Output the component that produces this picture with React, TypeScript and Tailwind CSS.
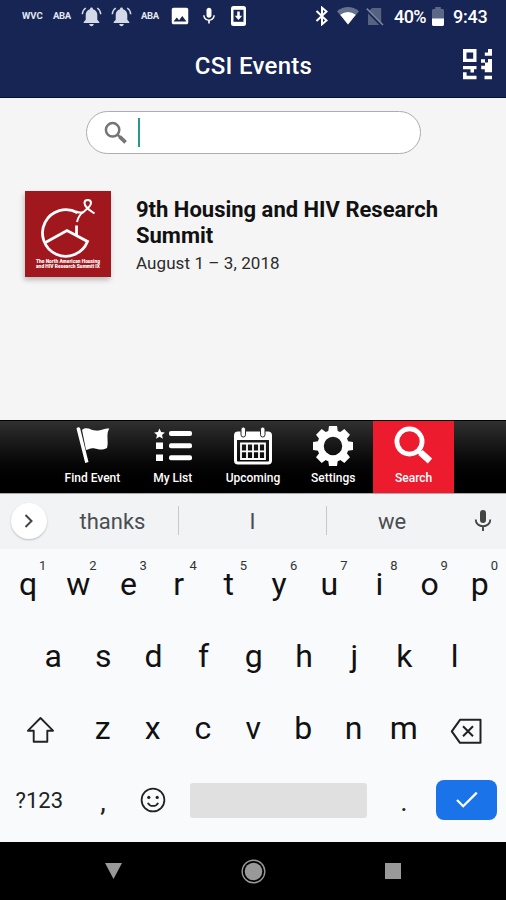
import type { ReactNode } from 'react';
import { MdImage, MdMic } from 'react-icons/md';

const topRow = ['q', 'w', 'e', 'r', 't', 'y', 'u', 'i', 'o', 'p'];
const homeRow = ['a', 's', 'd', 'f', 'g', 'h', 'j', 'k', 'l'];
const bottomRow = ['z', 'x', 'c', 'v', 'b', 'n', 'm'];

function BellIcon() {
  return (
    <svg className="ml-[9px] shrink-0" width="21" height="21" viewBox="0 0 21 21" fill="#d3d9e6">
      <path d="M10.5 1.5c1 0 1.5.7 1.5 1.7 3 .8 4.3 3 4.3 5.8v4.8l2 2.2v1H2.7v-1l2-2.2V9c0-2.8 1.3-5 4.3-5.8 0-1 .5-1.7 1.5-1.7zM8.3 18h4.4c0 1.3-1 2.2-2.2 2.2S8.300 19.300 8.300 18z" />
      <path d="M1.3 8.3C1.4 5.5 2.6 3.5 4.8 2M19.7 8.3c-.1-2.800-1.300-4.800-3.500-6.300" fill="none" stroke="#d3d9e6" strokeWidth="1.5" />
    </svg>
  );
}

function StatusBar() {
  return (
    <div className="flex h-8 items-center text-white">
      <span className="ml-[22px] w-[21px] text-[9.5px] font-bold text-slate-200">WVC</span>
      <span className="ml-[10px] w-[19px] text-[9.5px] font-bold tracking-[-0.4px] text-slate-200">ABA</span>
      <BellIcon />
      <BellIcon />
      <span className="ml-[9px] w-[19px] text-[9.5px] font-bold tracking-[-0.4px] text-slate-200">ABA</span>
      <MdImage className="ml-[9px] size-[22px] shrink-0" />
      <MdMic className="ml-[8px] size-[20px] shrink-0" />
      <svg className="ml-[12px] shrink-0" width="15" height="20" viewBox="0 0 15 20">
        <rect width="15" height="20" rx="2.5" fill="#fff" />
        <rect x="2.5" y="3.8" width="10" height="12" fill="#172554" />
        <path d="M6.2 5.5h2.6v4.2h2.4L7.5 14 3.8 9.7h2.4z" fill="#fff" />
      </svg>
      <svg className="ml-[69px] mr-[5px] shrink-0" width="14" height="20" viewBox="0 0 14 20" fill="none" stroke="#fff" strokeWidth="2">
        <path d="m1.500 5 10 9.500L7 18.300V1.700l4.500 3.800L1.500 15" />
      </svg>
      <svg className="ml-[3px] shrink-0" width="22" height="18" viewBox="0 0 22 18">
        <path d="M0 4.2Q11-4 22 4.2L11 17.5z" fill="#66718f" />
        <path d="M3.2 7.8Q11 2 18.8 7.8L11 17.5z" fill="#fff" />
      </svg>
      <svg className="ml-[7px] shrink-0" width="18" height="19" viewBox="0 0 18 19">
        <path d="M6 1h9.2v17H2V5z" fill="#56627f" />
        <path d="M0 2.2 16 18.6" stroke="#172554" strokeWidth="3" />
        <path d="M.8 1.6 17 18" stroke="#7d87a0" strokeWidth="1.5" />
      </svg>
      <span className="ml-[10px] w-[34px] text-[18px] font-medium tracking-[-0.6px]">40%</span>
      <svg className="ml-[4px] mt-px shrink-0" width="12" height="19" viewBox="0 0 12 19">
        <path d="M3.2 0h5.600v2H11l1 1v9H0V3l1-1h2.200z" fill="#5c6886" />
        <path d="M0 11.5h12V18l-1 1H1l-1-1z" fill="#fff" />
      </svg>
      <span className="ml-[9px] text-[18px] font-medium tracking-[-0.2px]">9:43</span>
    </div>
  );
}

function ScanIcon() {
  return (
    <svg width="30" height="31" viewBox="0 0 30 31" fill="#fff">
      <path fillRule="evenodd" d="M0 0h13.5v13H0zM3.5 3.5v6.2h6.7V3.5z" />
      <path d="M0 17h13.5v3.2H11v3.2H7.5v-3.2H0zM0 23.3h3.6v3.4h9.9v3.6H0z" />
      <path d="M25 0h4v6.8h-7.2V3.6H25zM18 10.3h4v3.2h3V10h4v13.3h-7.2v-3h-3.6v-3.5H22v-3H18zM21.5 26.8H29v3.5h-7.5z" />
    </svg>
  );
}

function Header() {
  return (
    <header className="h-[98px] border-b border-[#080e2b] bg-[#172554]">
      <StatusBar />
      <div className="grid h-[65px] grid-cols-[1fr_auto_1fr] items-center">
        <h1 className="col-start-2 pl-[1px] pt-[2px] text-[24px] font-medium tracking-[0.3px] text-white">CSI Events</h1>
        <div className="mr-[13px] justify-self-end">
          <ScanIcon />
        </div>
      </div>
    </header>
  );
}

function EventLogo() {
  return (
    <svg className="size-[86px] shrink-0 shadow-[-1px_3px_5px_#bbb]" viewBox="0 0 86 86">
      <rect width="86" height="86" fill="#a0181e" />
      <g fill="none" stroke="#fff" strokeWidth="2.8">
        <path d="M52.5 21.8A23.3 23.3 0 1 0 62.5 50.5L42 39.5 19.500 52" />
        <path d="M51.5 45V34.5" />
        <path d="M52 31c1-5 3-8 7-10.5 3-2.5 7-5.5 7-8.5 0-4-6.5-4-6.5 0 0 4 5 7 10 10.5" strokeWidth="2" />
        <path d="M51 20.5c3 1.5 5 1.5 8 .5" strokeWidth="2" />
      </g>
      <text x="43" y="72" textAnchor="middle" textLength="64" lengthAdjust="spacingAndGlyphs" fontSize="5.2" fontWeight="900" fill="#fff">The North American Housing</text>
      <text x="43" y="77" textAnchor="middle" textLength="64" lengthAdjust="spacingAndGlyphs" fontSize="5.2" fontWeight="900" fill="#fff">and HIV Research Summit IX</text>
    </svg>
  );
}

function Events() {
  return (
    <main className="h-[322px] bg-[#f5f5f5] pt-[13px]">
      <div className="mx-auto flex h-[43px] w-[335px] items-center rounded-full border border-[#adadad] bg-white pl-[17px]">
        <svg width="24" height="24" viewBox="0 0 24 24" fill="none" stroke="#757575">
          <circle cx="8.6" cy="8.8" r="6.7" strokeWidth="2.5" />
          <path d="m13.5 13.6 3 3" strokeWidth="2.5" />
          <path d="m15.6 15.7 6 5.6" strokeWidth="3.8" />
        </svg>
        <span className="ml-[10px] h-[29px] w-[2.5px] bg-[#26998a]" />
      </div>
      <article className="mt-[37px] flex pl-[25px]">
        <EventLogo />
        <div className="ml-[25px] pt-[6px]">
          <h2 className="w-[320px] text-[22px] font-bold leading-[25.5px] text-[#111]">
            9th Housing and HIV Research Summit
          </h2>
          <p className="mt-[4px] text-[17px] leading-[22px] tracking-[0.08px] text-[#2b2b2b]">August 1 – 3, 2018</p>
        </div>
      </article>
    </main>
  );
}

function FlagIcon() {
  return (
    <svg width="40" height="40" viewBox="0 0 40 40" fill="#fff">
      <path d="M4.5 2.5a2 2 0 0 1 3.6-.3L16.500 36l-3.300 1z" />
      <path d="M10 3.8c5-4 9 .5 14 .8 5 .3 7-2 13.300-2C33.500 9 37 15 35 22c-6 3-9 1-13 .300-4-.500-5 1-8 1.700z" />
    </svg>
  );
}

function ListIcon() {
  return (
    <svg width="40" height="40" viewBox="0 0 40 40" fill="#fff">
      <path d="m6.5 2.5 1.6 3.5 3.8.4L9 9l.9 3.8-3.4-2-3.4 2L4 9 1.1 6.4l3.8-.4z" />
      <path d="M3 16.500h7v6.500H3zM3 28.500h7V35H3z" />
      <rect x="16" y="5" width="23" height="5" rx="2" />
      <rect x="16" y="17.2" width="23" height="5" rx="2" />
      <rect x="16" y="29.300" width="23" height="5" rx="2" />
    </svg>
  );
}

function CalendarIcon() {
  return (
    <svg width="40" height="40" viewBox="0 0 40 40">
      <rect x="2.5" y="7" width="35" height="30" rx="2.5" fill="none" stroke="#fff" strokeWidth="3" />
      <path d="M3 7h34v7H3z" fill="#fff" />
      <rect x="8" y="1" width="4.5" height="10" rx="2.2" fill="#fff" stroke="#292929" />
      <rect x="27.5" y="1" width="4.5" height="10" rx="2.2" fill="#fff" stroke="#292929" />
      <path d="M8 17.5h24V33H8zM8 25.3h24M14 17.5V33M20 17.5V33M26 17.5V33" fill="none" stroke="#fff" strokeWidth="1.8" />
    </svg>
  );
}

function GearIcon() {
  return (
    <svg width="40" height="40" viewBox="0 0 40 40">
      <circle cx="20" cy="20" r="12.5" fill="none" stroke="#fff" strokeWidth="6.5" />
      {[0, 45, 90, 135, 180, 225, 270, 315].map((angle) => (
        <path key={angle} d="M15 7 16 0h8l1 7z" fill="#fff" transform={`rotate(${angle} 20 20)`} />
      ))}
    </svg>
  );
}

function SearchIcon() {
  return (
    <svg width="40" height="40" viewBox="0 0 40 40" fill="none" stroke="#fff">
      <circle cx="15.5" cy="15.5" r="12.6" strokeWidth="4.8" />
      <path d="m23.500 24 4 4" strokeWidth="4" />
      <path d="m26.500 26.500 9.500 8.500" strokeWidth="6.5" />
    </svg>
  );
}

const tabs = [
  { label: 'Find Event', icon: <FlagIcon /> },
  { label: 'My List', icon: <ListIcon /> },
  { label: 'Upcoming', icon: <CalendarIcon /> },
  { label: 'Settings', icon: <GearIcon /> },
  { label: 'Search', icon: <SearchIcon />, active: true },
];

function TabBar() {
  return (
    <nav className="flex h-[73px] justify-center border-t border-black bg-linear-to-b from-[#303030] to-black">
      {tabs.map((tab) => (
        <div
          key={tab.label}
          className={`flex w-[80.3px] flex-col items-center pt-[5px] text-white ${tab.active ? 'bg-[#ec1c2e]' : ''}`}
        >
          {tab.icon}
          <span className="mt-[4px] text-[12px] font-medium leading-4">{tab.label}</span>
        </div>
      ))}
    </nav>
  );
}

function Key({ children, hint }: { children: ReactNode; hint?: string }) {
  return (
    <div className="relative flex w-[50.2px] justify-center text-[32px] leading-[40px] text-[#111]">
      {children}
      {hint && <sup className="absolute left-[36px] top-[-6px] text-[13px] leading-4 text-[#333]">{hint}</sup>}
    </div>
  );
}

function Suggestions() {
  return (
    <div className="flex h-[56px] items-center border-t border-[#aaa] bg-[#f1f3f5] text-[22px] text-[#4a4d50]">
      <div className="-mt-[2px] ml-[11px] flex size-[36px] items-center justify-center rounded-full bg-white shadow-[0_1px_2px_#bbb]">
        <svg width="12" height="16" viewBox="0 0 12 16" fill="none" stroke="#444" strokeWidth="2">
          <path d="m2.5 2 6 6-6 6" />
        </svg>
      </div>
      <span className="w-[131px] text-center">thanks</span>
      <span className="-mt-[2px] h-[29px] w-px bg-[#c6c9cc]" />
      <span className="w-[147px] text-center">I</span>
      <span className="-mt-[2px] h-[29px] w-px bg-[#c6c9cc]" />
      <span className="w-[130px] text-center">we</span>
      <svg className="-mt-[2px] ml-[17px]" width="18" height="23" viewBox="0 0 18 23">
        <rect x="6" y="1" width="6" height="13" rx="3" fill="#444" />
        <path d="M1.7 10.5c0 9 14.6 9 14.6 0M9 17.5V22" fill="none" stroke="#444" strokeWidth="1.9" />
      </svg>
    </div>
  );
}

function Keyboard() {
  return (
    <section className="h-[349px] bg-[#f9fafc]">
      <Suggestions />
      <div className="flex h-[72px] pl-[3px] pt-[15px]">
        {topRow.map((letter, i) => (
          <Key key={letter} hint={String((i + 1) % 10)}>{letter}</Key>
        ))}
      </div>
      <div className="flex h-[72px] pl-[28px] pt-[15px]">
        {homeRow.map((letter) => (
          <Key key={letter}>{letter}</Key>
        ))}
      </div>
      <div className="flex h-[72px] pt-[15px]">
        <svg className="ml-[26px] mt-[8px] shrink-0" width="29" height="28" viewBox="0 0 29 28" fill="none" stroke="#222" strokeWidth="1.9" strokeLinejoin="round">
          <path d="M14.5 2 2 14.7h5.7v11h13.6v-11H27z" />
        </svg>
        <div className="ml-[22.5px] flex">
          {bottomRow.map((letter) => (
            <Key key={letter}>{letter}</Key>
          ))}
        </div>
        <svg className="ml-[21px] mt-[9.5px] shrink-0" width="33" height="27" viewBox="0 0 33 27" fill="none" stroke="#222" strokeWidth="2" strokeLinejoin="round">
          <path d="M10 1.8h20.5v23H10L1.8 13.3z" />
          <path d="m13 8.3 10 10M23 8.3l-10 10" />
        </svg>
      </div>
      <div className="flex h-[70px] items-center text-[#222]">
        <span className="ml-[15.5px] w-[50px] text-[22px]">?123</span>
        <span className="ml-[27.5px] w-[20px] pt-[4px] text-center text-[28px]">,</span>
        <svg className="ml-[27px]" width="26" height="26" viewBox="0 0 26 26" fill="none" stroke="#222" strokeWidth="1.8">
          <circle cx="13" cy="13" r="11.4" />
          <path d="M7.8 15.8c2.2 4.2 8.2 4.2 10.4 0" />
          <circle cx="8.8" cy="10.4" r="1.6" fill="#222" stroke="none" />
          <circle cx="17.2" cy="10.4" r="1.6" fill="#222" stroke="none" />
        </svg>
        <div className="ml-[24px] h-[35px] w-[177px] rounded-[3px] bg-[#e0e0e0]" />
        <span className="ml-[27px] w-[20px] pt-[4px] text-center text-[28px]">.</span>
        <div className="ml-[22px] flex h-[40px] w-[61px] items-center justify-center rounded-lg bg-[#1a73e8]">
          <svg width="24" height="18" viewBox="0 0 24 18" fill="none" stroke="#fff" strokeWidth="2.3">
            <path d="m2 9 6.2 6.2L21.8 1.6" />
          </svg>
        </div>
      </div>
    </section>
  );
}

function NavigationBar() {
  return (
    <footer className="flex h-[58px] items-center bg-black">
      <svg className="ml-[105px]" width="17" height="16" viewBox="0 0 17 16">
        <path d="M0 0h17L8.5 16z" fill="#999" />
      </svg>
      <svg className="ml-[119px]" width="25" height="25" viewBox="0 0 25 25">
        <circle cx="12.5" cy="12.5" r="11.3" fill="none" stroke="#999" strokeWidth="1.4" />
        <circle cx="12.5" cy="12.5" r="8.8" fill="#999" />
      </svg>
      <div className="ml-[119px] size-4 bg-[#999]" />
    </footer>
  );
}

export default function App() {
  return (
    <div className="h-[900px] w-[506px] overflow-hidden font-[Roboto,sans-serif]">
      <Header />
      <Events />
      <TabBar />
      <Keyboard />
      <NavigationBar />
    </div>
  );
}
